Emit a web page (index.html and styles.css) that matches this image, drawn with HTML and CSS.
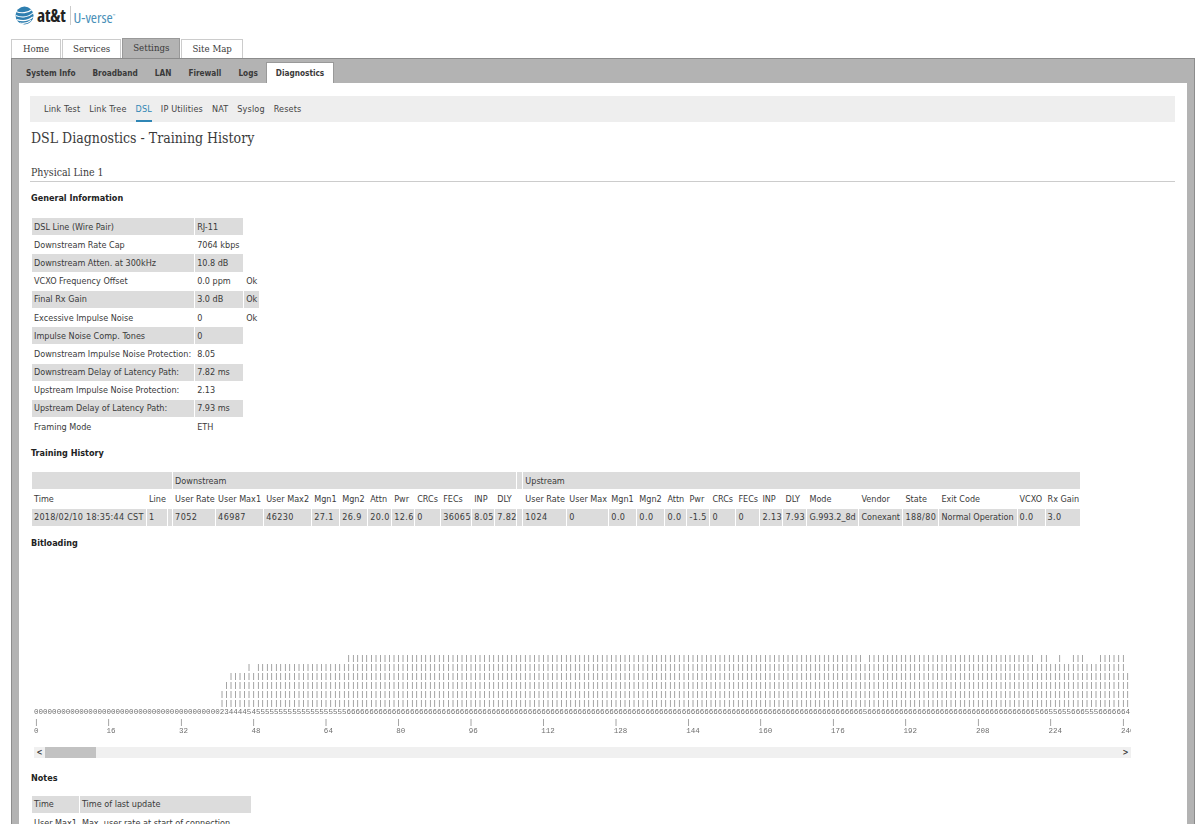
FILE: index.html
```html
<!DOCTYPE html>
<html lang="en">
<head>
    <meta charset="UTF-8">
    <meta name="viewport" content="width=device-width, initial-scale=1.0">
    <title>DSL Diagnostics - Training History</title>
    <link rel="stylesheet" href="styles.css">
</head>
<body>
    <div class="header">
        <svg class="globe" width="19" height="19" viewBox="0 0 19 19">
            <circle cx="9.5" cy="9.5" r="9" fill="#2f7fb0"/>
            <path d="M1 5.5c5 2.2 12 1.4 16-2M.6 9.5c6 2.4 13 1.6 17.6-2.6M1.6 13.6c6 1.8 12 1.2 16-2.6M5 17c4 .8 8 0 11-2.6" fill="none" stroke="#fff" stroke-width="1.2"/>
        </svg>
        <span class="brand">at&amp;t</span>
        <span class="product">U-verse<sup>™</sup></span>
    </div>

    <ul class="main-tabs">
        <li>Home</li>
        <li>Services</li>
        <li class="active">Settings</li>
        <li>Site Map</li>
    </ul>

    <div class="frame">
        <ul class="sub-tabs">
            <li>System Info</li>
            <li>Broadband</li>
            <li>LAN</li>
            <li>Firewall</li>
            <li>Logs</li>
            <li class="active">Diagnostics</li>
        </ul>

        <div class="content">
            <ul class="link-bar">
                <li>Link Test</li>
                <li>Link Tree</li>
                <li class="active">DSL</li>
                <li>IP Utilities</li>
                <li>NAT</li>
                <li>Syslog</li>
                <li>Resets</li>
            </ul>

            <h1>DSL Diagnostics - Training History</h1>
            <h2>Physical Line 1</h2>

            <h3 class="first">General Information</h3>
            <table class="info">
                <tr><td>DSL Line (Wire Pair)</td><td>RJ-11</td></tr>
                <tr><td>Downstream Rate Cap</td><td>7064 kbps</td></tr>
                <tr><td>Downstream Atten. at 300kHz</td><td>10.8 dB</td></tr>
                <tr><td>VCXO Frequency Offset</td><td>0.0 ppm</td><td>Ok</td></tr>
                <tr><td>Final Rx Gain</td><td>3.0 dB</td><td>Ok</td></tr>
                <tr><td>Excessive Impulse Noise</td><td>0</td><td>Ok</td></tr>
                <tr><td>Impulse Noise Comp. Tones</td><td>0</td></tr>
                <tr><td>Downstream Impulse Noise Protection:</td><td>8.05</td></tr>
                <tr><td>Downstream Delay of Latency Path:</td><td>7.82 ms</td></tr>
                <tr><td>Upstream Impulse Noise Protection:</td><td>2.13</td></tr>
                <tr><td>Upstream Delay of Latency Path:</td><td>7.93 ms</td></tr>
                <tr><td>Framing Mode</td><td>ETH</td></tr>
            </table>

            <h3>Training History</h3>
            <table class="history">
                <colgroup>
                    <col width="114"><col width="20"><col width="4">
                    <col width="42"><col width="47"><col width="47"><col width="27"><col width="27"><col width="23"><col width="22"><col width="25"><col width="30"><col width="22"><col width="21">
                    <col width="5">
                    <col width="43"><col width="41"><col width="27"><col width="27"><col width="21"><col width="22"><col width="25"><col width="23"><col width="22"><col width="23">
                    <col width="51"><col width="43"><col width="35"><col width="77"><col width="27"><col width="34">
                </colgroup>
                <tr class="shade">
                    <td colspan="3"></td>
                    <td colspan="11">Downstream</td>
                    <td class="sep"></td>
                    <td colspan="16">Upstream</td>
                </tr>
                <tr>
                    <td>Time</td><td>Line</td><td class="sep"></td>
                    <td>User Rate</td><td>User Max1</td><td>User Max2</td><td>Mgn1</td><td>Mgn2</td><td>Attn</td><td>Pwr</td><td>CRCs</td><td>FECs</td><td>INP</td><td>DLY</td>
                    <td class="sep"></td>
                    <td>User Rate</td><td>User Max</td><td>Mgn1</td><td>Mgn2</td><td>Attn</td><td>Pwr</td><td>CRCs</td><td>FECs</td><td>INP</td><td>DLY</td>
                    <td>Mode</td><td>Vendor</td><td>State</td><td>Exit Code</td><td>VCXO</td><td>Rx Gain</td>
                </tr>
                <tr class="shade values">
                    <td class="stamp">2018/02/10 18:35:44 CST</td><td>1</td><td class="sep"></td>
                    <td>7052</td><td>46987</td><td>46230</td><td>27.1</td><td>26.9</td><td>20.0</td><td>12.6</td><td>0</td><td>36065</td><td>8.05</td><td>7.82</td>
                    <td class="sep"></td>
                    <td>1024</td><td>0</td><td>0.0</td><td>0.0</td><td>0.0</td><td>-1.5</td><td>0</td><td>0</td><td>2.13</td><td>7.93</td>
                    <td class="text">G.993.2_8d</td><td class="text">Conexant</td><td>188/80</td><td class="text">Normal Operation</td><td>0.0</td><td>3.0</td>
                </tr>
            </table>

            <h3>Bitloading</h3>
            <pre class="bits" id="bits"></pre>
            <div class="scrollbar">
                <span class="arrow">&lt;</span>
                <span class="thumb"></span>
                <span class="arrow end">&gt;</span>
            </div>

            <h3>Notes</h3>
            <table class="notes">
                <tr><td>Time</td><td>Time of last update</td></tr>
                <tr><td>User Max1</td><td>Max. user rate at start of connection</td></tr>
            </table>
        </div>
    </div>

    <script src="bits.js"></script>
</body>
</html>
```

FILE: styles.css
```css
html, body {
    height: 824px;
    overflow: hidden;
}
body {
    font-family: "DejaVu Sans Condensed", "DejaVu Sans", Verdana, sans-serif;
    font-stretch: condensed;
    font-size: 9px;
    color: #3a3a3a;
    background: #fff;
    margin: 0;
    padding: 0 0 0 11px;
}
.header {
    height: 38px;
    display: flex;
    align-items: flex-start;
    padding: 6px 0 0 4px;
    box-sizing: border-box;
}
.brand {
    font-family: "Open Sans", sans-serif;
    font-size: 17.5px;
    font-weight: 700;
    color: #222;
    margin-left: 3px;
    padding-right: 4px;
    border-right: 1px solid #ccc;
    line-height: 19px;
    letter-spacing: -.2px;
}
.product {
    font-family: "Open Sans", sans-serif;
    font-size: 15px;
    line-height: 19px;
    color: #4a90b8;
    margin-left: 3px;
}
.product sup {
    font-size: 4px;
}
ul {
    list-style: none;
    margin: 0;
    padding: 0;
    display: flex;
}
.main-tabs {
    gap: 1px;
    font-family: "DejaVu Serif Condensed", "DejaVu Serif", Georgia, serif;
    font-size: 9.6px;
    height: 20px;
    align-items: flex-end;
}
.main-tabs li {
    height: 18px;
    line-height: 18px;
    padding: 0 10px;
    border: 1px solid #ccc;
    border-bottom: none;
}
.main-tabs li:first-child {
    padding: 0 11px;
}
.main-tabs .active {
    height: 19px;
    line-height: 18px;
    background: #b3b3b3;
    border-color: #999;
}
.frame {
    background: #b3b3b3;
    border: 1px solid #8c8c8c;
    width: 1182px;
    height: 800px;
}
.sub-tabs {
    height: 24px;
    padding-left: 5.5px;
    align-items: flex-end;
    font-size: 8.2px;
    font-weight: 700;
}
.sub-tabs li {
    padding: 0 8.5px;
    line-height: 20px;
}
.sub-tabs .active {
    background: #fff;
    border: 1px solid #999;
    border-bottom: none;
    margin-left: 0;
}
.content {
    background: #fff;
    margin: 0 7px;
    height: 780px;
    padding: 13px 12px 0 11px;
}
.link-bar {
    background: #eee;
    height: 26px;
    padding-left: 14px;
    gap: 9px;
    align-items: center;
    color: #444;
    letter-spacing: .15px;
}
.link-bar li {
    line-height: 21px;
    border-bottom: 2px solid transparent;
    margin-top: 3px;
}
.link-bar .active {
    color: #2f86b5;
    border-bottom-color: #2f86b5;
}
h1 {
    font-family: "DejaVu Serif Condensed", "DejaVu Serif", Georgia, serif;
    font-size: 14px;
    font-weight: 400;
    margin: 6px 0 0 1px;
    line-height: 20px;
}
h2 {
    font-family: "DejaVu Serif Condensed", "DejaVu Serif", Georgia, serif;
    font-size: 10.5px;
    font-weight: 400;
    margin: 15px 0 0;
    padding-left: 1px;
    line-height: 19px;
    height: 18px;
    border-bottom: 1px solid #ccc;
}
h3 {
    font-size: 9px;
    font-weight: 700;
    color: #222;
    margin: 0 0 0 1px;
    line-height: 14px;
}
table {
    border-collapse: separate;
    border-spacing: 1px;
    margin-left: 1px;
}
td {
    padding: 0 2px;
    height: 17.2px;
    white-space: nowrap;
}
h3.first {
    margin-top: 9px;
}
.info {
    margin-top: 12px;
    margin-bottom: 10px;
}
.info td:first-child {
    padding-right: 3px;
}
.info td:nth-child(2) {
    width: 44px;
}
.info tr:nth-child(odd) td {
    background: #dcdcdc;
}
.history {
    table-layout: fixed;
    width: 1050px;
    margin-top: 11px;
    margin-bottom: 9px;
}
.history .shade td {
    background: #dcdcdc;
}
.values td {
    letter-spacing: .4px;
}
.values td.stamp {
    letter-spacing: .25px;
}
.values td.text {
    letter-spacing: 0;
}
.history td.sep {
    padding: 0;
}
.bits {
    font-family: "Liberation Mono", "DejaVu Sans Mono", monospace;
    font-size: 7.55px;
    line-height: 9.1px;
    color: #707070;
    margin: 4px 0 0 4px;
    height: 182px;
    width: 1097px;
    overflow: hidden;
    will-change: opacity;
}
.scrollbar {
    display: flex;
    align-items: center;
    height: 11px;
    width: 1097px;
    margin: 11px 0 13px 4px;
    background: #f0f0f0;
}
.arrow {
    width: 11px;
    text-align: center;
    font-weight: 700;
    font-size: 8px;
    background: #f0f0f0;
}
.thumb {
    width: 51px;
    height: 11px;
    background: #c2c2c2;
}
.end {
    margin-left: auto;
}
.notes {
    margin-top: 10px;
}
.notes td:last-child {
    width: 167px;
}
.notes tr:nth-child(odd) td {
    background: #dcdcdc;
}
```

FILE: bits.js
```js
// bits per tone, the rows of bars are drawn from this line
const tones = '0'.repeat(41) + '23444454' + '5'.repeat(20) + '6'.repeat(114) + '5' + '6'.repeat(37)
    + '5665565566655566666' + '64';
const rows = [];
for (let level = 6; level > 0; level--) {
    let row = '';
    for (const t of tones) {
        row += Number(t) >= level ? '|' : ' ';
    }
    rows.push(row);
}

let ticks = '';
let labels = '';
for (let i = 0; i <= 240; i += 16) {
    ticks += '|'.padEnd(16);
    labels += String(i).padEnd(16);
}

document.getElementById('bits').textContent =
    '\n'.repeat(11) + rows.join('\n') + '\n' + tones + '\n' + ticks + '\n' + labels;
```
